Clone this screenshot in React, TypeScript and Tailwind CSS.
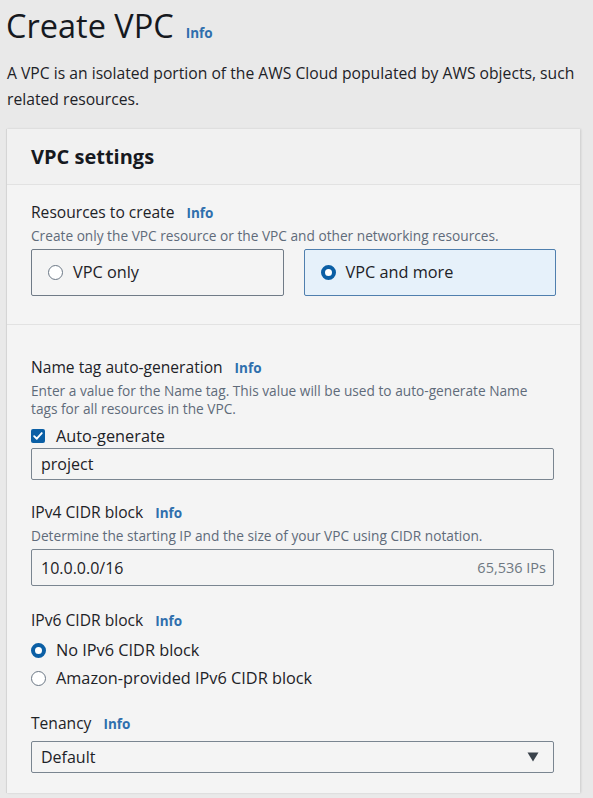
import * as React from "react";

const font = { fontFamily: "'Open Sans', 'Noto Sans', sans-serif" };

function Info({ className = "" }: { className?: string }) {
  return <span className={`ml-3 text-[13.5px] font-bold text-[#2f6fad] ${className}`}>Info</span>;
}

function Label({ children }: { children: React.ReactNode }) {
  return (
    <div className="flex items-baseline text-[15.6px] leading-[22px] text-[#1d2227]">
      <span>{children}</span>
      <Info />
    </div>
  );
}

function Desc({ children }: { children: React.ReactNode }) {
  return <p className="mt-[3px] text-[13.7px] leading-[18px] text-[#5f6b7a]">{children}</p>;
}

function Radio({ checked }: { checked?: boolean }) {
  return checked ? (
    <span className="box-border inline-block size-[15px] shrink-0 rounded-full border-[4px] border-[#0b5fa5] bg-white" />
  ) : (
    <span className="box-border inline-block size-[15px] shrink-0 rounded-full border border-[#6b7785] bg-white" />
  );
}

export default function App() {
  return (
    <div style={font} className="min-h-[798px] w-[593px] overflow-hidden bg-[#e9e9e9] pl-[6px]">
      <div className="flex items-baseline pt-[5px]">
        <h1 className="text-[32.5px] leading-[42px] text-[#16191f]">Create VPC</h1>
        <Info className="ml-[12px]" />
      </div>
      <p className="mt-[13px] pl-[1px] text-[15.7px] leading-[26px] whitespace-nowrap text-[#1d2227]">
        A VPC is an isolated portion of the AWS Cloud populated by AWS objects, such
        <br />
        related resources.
      </p>

      <div className="mt-[17px] w-[574px] border-l border-[#d5d5d5] bg-[#f4f4f4] shadow-[1px_0_2px_rgba(0,0,0,0.12)]">
        <div className="flex h-[56px] items-center border-b border-[#e2e2e2] bg-[#f1f1f1] pl-[24px]">
          <h2 className="text-[20px] font-bold text-[#16191f]">VPC settings</h2>
        </div>

        <div className="px-[24px] pt-[16px] pb-[28px]">
          <Label>Resources to create</Label>
          <Desc>Create only the VPC resource or the VPC and other networking resources.</Desc>
          <div className="mt-[4px] grid grid-cols-2 gap-[20px]">
            <div className="flex h-[47px] items-center gap-[10px] rounded-[2px] border border-[#707b87] px-[16px] text-[16.3px] text-[#1d2227]">
              <Radio />
              <span>VPC only</span>
            </div>
            <div className="flex h-[47px] items-center gap-[10px] rounded-[2px] border border-[#4f7fae] bg-[#e6f1fa] px-[16px] text-[16.3px] text-[#1d2227]">
              <Radio checked />
              <span>VPC and more</span>
            </div>
          </div>
        </div>

        <div className="border-t border-[#e2e2e2] px-[24px] pt-[31px] pb-[20px]">
          <Label>Name tag auto-generation</Label>
          <Desc>
            Enter a value for the Name tag. This value will be used to auto-generate Name tags for all resources in
            the VPC.
          </Desc>
          <div className="mt-[6px] flex items-center gap-[11px] text-[16.3px] text-[#1d2227]">
            <span className="flex size-[14px] items-center justify-center rounded-[2px] bg-[#0b5fa5]">
              <svg viewBox="0 0 14 14" className="size-[12px]" fill="none" stroke="white" strokeWidth="2.2">
                <path d="M2.5 7.2 L5.6 10.2 L11.4 3.6" strokeLinecap="round" strokeLinejoin="round" />
              </svg>
            </span>
            <span>Auto-generate</span>
          </div>
          <div className="mr-[2px] flex h-[32px] items-center rounded-[2px] border border-[#7a8590] px-[9px] text-[16px] text-[#1d2227]">
            project
          </div>

          <div className="mt-[21px]">
            <Label>IPv4 CIDR block</Label>
          </div>
          <Desc>Determine the starting IP and the size of your VPC using CIDR notation.</Desc>
          <div className="mt-[4px] mr-[2px] flex h-[37px] items-center justify-between rounded-[2px] border border-[#7a8590] pr-[7px] pl-[9px] text-[16px] text-[#1d2227]">
            <span>10.0.0.0/16</span>
            <span className="text-[14.5px] text-[#6e7781]">65,536 IPs</span>
          </div>

          <div className="mt-[23px]">
            <Label>IPv6 CIDR block</Label>
          </div>
          <div className="mt-[6px] flex flex-col gap-[3px] text-[16.3px] text-[#1d2227]">
            <div className="flex items-center gap-[10px]">
              <Radio checked />
              <span>No IPv6 CIDR block</span>
            </div>
            <div className="flex items-center gap-[10px]">
              <Radio />
              <span>Amazon-provided IPv6 CIDR block</span>
            </div>
          </div>

          <div className="mt-[22px]">
            <Label>Tenancy</Label>
          </div>
          <div className="mt-[6px] mr-[2px] flex h-[32px] items-center justify-between rounded-[2px] border border-[#7a8590] pr-[14px] pl-[9px] text-[16px] text-[#1d2227]">
            <span>Default</span>
            <svg viewBox="0 0 12 10" className="h-[10px] w-[12px]" fill="#3a424b">
              <path d="M0.5 0.5 H11.5 L6 9.5 Z" />
            </svg>
          </div>
        </div>
      </div>
    </div>
  );
}
